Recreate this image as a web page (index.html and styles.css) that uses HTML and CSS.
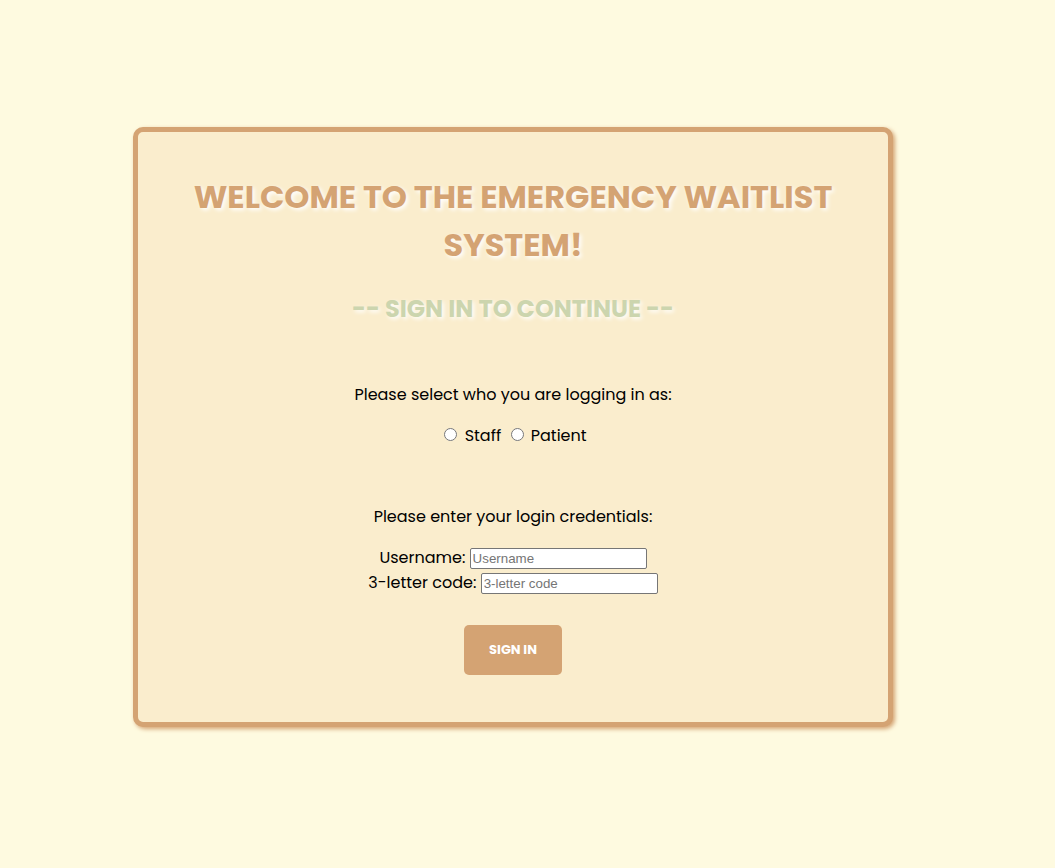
FILE: index.html
```html
<!DOCTYPE html>
<html lang="en">
<head>
<meta charset="utf-8">
<title>Emergency Waitlist</title>
<link rel="stylesheet" href="styles.css">
</head>
<body>
<main class="card">
  <h1 class="title">Welcome to the Emergency Waitlist System!</h1>
  <h2 class="subtitle">-- Sign in to continue --</h2>
  <form class="login">
    <p class="prompt">Please select who you are logging in as:</p>
    <div class="roles">
      <input class="radio" type="radio" id="staff" name="role">
      <label for="staff">Staff</label>
      <input class="radio" type="radio" id="patient" name="role">
      <label for="patient">Patient</label>
    </div>
    <p class="prompt">Please enter your login credentials:</p>
    <div class="field">
      <label for="username">Username:</label>
      <input class="box" type="text" id="username" placeholder="Username">
    </div>
    <div class="field">
      <label for="code">3-letter code:</label>
      <input class="box" type="text" id="code" placeholder="3-letter code">
    </div>
    <button class="submit" type="submit">SIGN IN</button>
  </form>
</main>
</body>
</html>
```
FILE: styles.css
```css
* { box-sizing: border-box; }
body {
  margin: 0;
  min-height: 100vh;
  padding: 127px 162px 141px 133px;
  background: #fefae0;
  color: #000;
  font-family: Poppins, Inter, "Open Sans", sans-serif;
  font-size: 16px;
  line-height: 25px;
  text-align: center;
}
.card {
  padding: 41px 48px 47px;
  border: 5px solid #d4a373;
  border-radius: 10px;
  background: #faedcd;
  box-shadow: 2px 2px 4px #d4a373;
}
.title {
  margin: 0;
  color: #d4a373;
  font-size: 32px;
  line-height: 48px;
  text-transform: uppercase;
  text-shadow: 2px 2px 4px #fff;
}
.subtitle {
  margin: 22px 0 55px;
  color: #ccd5ae;
  font-size: 24px;
  line-height: 36px;
  text-transform: uppercase;
  text-shadow: 2px 2px 4px #fff;
}
.prompt { margin: 0 0 16px; }
.roles { margin-bottom: 56px; }
.radio { margin: 3px 3px 0 5px; }
.box {
  width: 177px;
  height: 21px;
  padding: 1px 2px;
  border: 1px solid #767676;
  border-radius: 2px;
  background: #fff;
}
.submit {
  height: 50px;
  margin-top: 30px;
  padding: 0 25px;
  border: 0;
  border-radius: 5px;
  background: #d4a373;
  color: #fff;
  font: bold 13px Poppins, Inter, sans-serif;
}
```
